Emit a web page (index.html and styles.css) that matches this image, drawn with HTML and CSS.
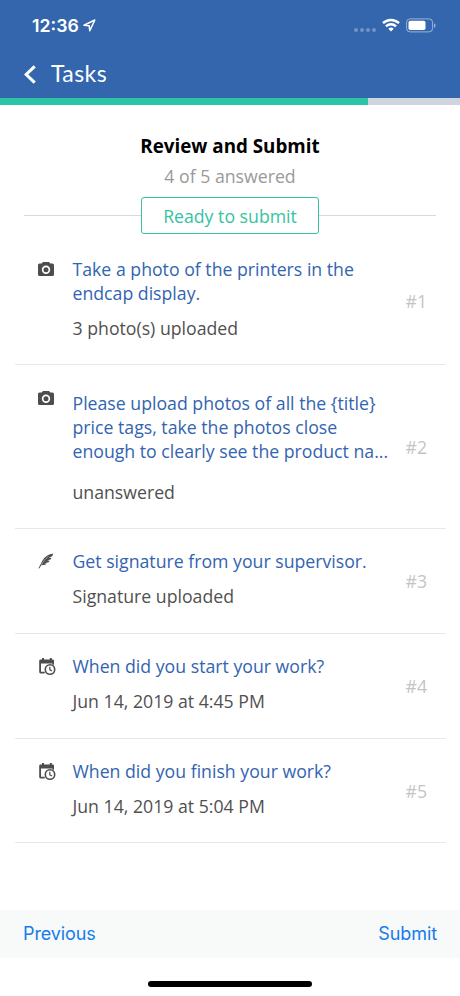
FILE: index.html
```html
<!DOCTYPE html>
<html lang="en">
<head>
  <meta charset="UTF-8">
  <meta name="viewport" content="width=device-width, initial-scale=1.0">
  <title>Tasks - Review and Submit</title>
  <link rel="stylesheet" href="styles.css">
</head>
<body>
  <!-- Shared icons -->
  <svg class="icon-defs" width="0" height="0">
    <symbol id="icon-camera" viewBox="0 0 16 14">
      <path fill-rule="evenodd" d="M5 0h6l1.400 1.500H14.500a1.500 1.500 0 0 1 1.500 1.500v9.500a1.500 1.500 0 0 1-1.500 1.500h-13A1.500 1.500 0 0 1 0 12.500V3a1.500 1.500 0 0 1 1.500-1.500h2.100zM8 3.500a4.200 4.200 0 1 0 0 8.400 4.200 4.200 0 0 0 0-8.400zm0 1.700a2.500 2.500 0 1 1 0 5 2.500 2.500 0 0 1 0-5z"/>
    </symbol>
    <symbol id="icon-feather" viewBox="0 0 16 16">
      <path d="M15.300.4C10.500 1 6.800 3.500 4.600 7.300 3.400 9.400 2.900 11.300.4 15.200l.8.400 2.300-3.500c2 .3 3.900-.1 5.400-1.300l-2.300-.5 4.100-1 1-1.500-2.500-.2 3.700-1.300.5-1.400-2.500-.1 3.300-1.500z"/>
      <path d="M3.600 11.800C5 8.600 7.200 5.700 10.500 3.500" fill="none" stroke="#fff" stroke-width=".4"/>
    </symbol>
    <symbol id="icon-calendar" viewBox="0 0 17 17">
      <path d="M1.600 1.400H3V0h2v1.400h5.800V0h2v1.400h.8A1.400 1.400 0 0 1 15 2.800V6.700H13.400V5.500H2v8.300h3.700v1.700H1.600A1.400 1.400 0 0 1 .2 14.100V2.800a1.400 1.400 0 0 1 1.400-1.400z"/>
      <circle cx="11" cy="11.500" r="4.700" fill="none" stroke="currentColor" stroke-width="1.600"/>
      <path d="M10.800 8.700v3.100l2.200 1.300" fill="none" stroke="currentColor" stroke-width="1.200"/>
    </symbol>
  </svg>

  <div class="header">
    <div class="status-bar">
      <div class="clock">12:36</div>
      <svg class="location" width="13" height="13" viewBox="0 0 13 13">
        <path d="M1 6.200L11.800 1 6.800 11.800 6.200 6.700z" fill="none" stroke="#fff" stroke-width="1.500" stroke-linejoin="round"/>
      </svg>
      <div class="signal"><span></span><span></span><span></span><span></span></div>
      <svg class="wifi" width="18" height="14" viewBox="0 0 18 14">
        <path d="M1 5.200a11.400 11.400 0 0 1 16 0M4 8.300a7.200 7.200 0 0 1 10 0" fill="none" stroke="#fff" stroke-width="2.500"/>
        <path d="M9 13.500L6.300 10.800a3.900 3.900 0 0 1 5.400 0z" fill="#fff"/>
      </svg>
      <svg class="battery" width="30" height="15" viewBox="0 0 30 15">
        <rect x=".6" y=".9" width="26" height="13" rx="3.500" fill="none" stroke="#fff" stroke-opacity=".5"/>
        <rect x="2.500" y="2.800" width="17" height="9.200" rx="1.800" fill="#fff"/>
        <path d="M28 5.200c2.100.8 2.100 3.800 0 4.600z" fill="#fff" fill-opacity=".5"/>
      </svg>
    </div>
    <div class="nav-bar">
      <svg width="12" height="19" viewBox="0 0 12 19">
        <path d="M10.700 1.300L2.200 9.500l8.500 8.200" fill="none" stroke="#fff" stroke-width="3.100"/>
      </svg>
      <div class="nav-title">Tasks</div>
    </div>
  </div>
  <div class="progress"><div class="progress-fill"></div></div>

  <div class="summary">
    <h1>Review and Submit</h1>
    <p class="answered">4 of 5 answered</p>
    <div class="ready-row">
      <div class="ready">Ready to submit</div>
    </div>
  </div>

  <div class="questions">
    <div class="question">
      <svg class="icon camera"><use href="#icon-camera"/></svg>
      <div class="question-text">
        <div class="question-title">Take a photo of the printers in the<br>endcap display.</div>
        <div class="answer">3 photo(s) uploaded</div>
      </div>
      <div class="number">#1</div>
    </div>
    <div class="question long">
      <svg class="icon camera"><use href="#icon-camera"/></svg>
      <div class="question-text">
        <div class="question-title">Please upload photos of all the {title}<br>price tags, take the photos close<br>enough to clearly see the product na...</div>
        <div class="answer">unanswered</div>
      </div>
      <div class="number">#2</div>
    </div>
    <div class="question">
      <svg class="icon feather"><use href="#icon-feather"/></svg>
      <div class="question-text">
        <div class="question-title">Get signature from your supervisor.</div>
        <div class="answer">Signature uploaded</div>
      </div>
      <div class="number">#3</div>
    </div>
    <div class="question">
      <svg class="icon calendar"><use href="#icon-calendar"/></svg>
      <div class="question-text">
        <div class="question-title">When did you start your work?</div>
        <div class="answer">Jun 14, 2019 at 4:45 PM</div>
      </div>
      <div class="number">#4</div>
    </div>
    <div class="question">
      <svg class="icon calendar"><use href="#icon-calendar"/></svg>
      <div class="question-text">
        <div class="question-title">When did you finish your work?</div>
        <div class="answer">Jun 14, 2019 at 5:04 PM</div>
      </div>
      <div class="number">#5</div>
    </div>
  </div>

  <div class="toolbar">
    <a class="previous">Previous</a>
    <a class="submit">Submit</a>
  </div>
  <div class="home-indicator"></div>
</body>
</html>
```
FILE: styles.css
```css
* {
  box-sizing: border-box;
}

body {
  display: flex;
  flex-direction: column;
  width: 460px;
  height: 996px;
  margin: 0;
  background: #fff;
  font-family: 'Open Sans', sans-serif;
  font-size: 17.7px;
  line-height: 24px;
  color: #505050;
  overflow: hidden;
}

.icon-defs {
  display: none;
}

.header {
  height: 98px;
  background: #3466ae;
  color: #fff;
}

.status-bar {
  display: flex;
  align-items: center;
  height: 50px;
  padding: 1px 24px 0 32px;
}

.clock {
  width: 47px;
  font-family: Inter, sans-serif;
  font-size: 17.7px;
  font-weight: 600;
}

.location {
  margin-left: 4px;
}

.signal {
  display: flex;
  gap: 2px;
  margin: 9px 6px 0 auto;
}

.signal span {
  width: 4px;
  height: 4px;
  border-radius: 50%;
  background: #7194c6;
}

.wifi {
  margin-top: -1px;
}

.battery {
  margin-left: 6px;
}

.nav-bar {
  display: flex;
  align-items: center;
  height: 48px;
  padding-left: 24px;
}

.nav-title {
  margin: -3px 0 0 15px;
  font-family: Lato, sans-serif;
  font-size: 23px;
  letter-spacing: 0.4px;
}

.progress {
  height: 7px;
  background: #ced5df;
}

.progress-fill {
  width: 80%;
  height: 100%;
  background: #2bc4a6;
}

.summary {
  height: 131px;
  padding-top: 29px;
  text-align: center;
}

h1 {
  margin: 0;
  font-size: 18.8px;
  font-weight: bold;
  line-height: 24px;
  color: #000;
}

.answered {
  margin: 6px 0 9px;
  color: #999;
}

.ready-row {
  display: flex;
  align-items: center;
  margin: 0 24px;
}

/* Lines either side of the badge */
.ready-row::before,
.ready-row::after {
  content: "";
  flex: 1;
  height: 1px;
  background: #d5dadb;
}

.ready {
  width: 178px;
  height: 37px;
  border: 1px solid #36c3a1;
  border-radius: 3px;
  line-height: 36px;
  color: #36c3a1;
}

.questions {
  padding: 0 14px 0 15px;
}

.question {
  display: flex;
  padding: 20px 19px 25px 23px;
  border-bottom: 1px solid #e8e8ea;
}

.question:first-child {
  padding: 21px 19px 24px 23px;
}

.question.long {
  padding: 21px 19px 24px 23px;
}

.question:last-child {
  padding-bottom: 24px;
}

.icon {
  flex: none;
  fill: currentColor;
  color: #4d4d4d;
}

.camera {
  width: 16px;
  height: 14px;
  margin-top: 5px;
}

.feather {
  width: 16px;
  height: 16px;
  margin-top: 4px;
}

.calendar {
  width: 17px;
  height: 17px;
  margin: 4px -2px 0 1px;
}

.question-text {
  width: 320px;
  margin-left: 18.5px;
}

.question-title {
  color: #3264b0;
}

.long .question-title {
  margin: 5px 0;
}

.answer {
  margin-top: 11px;
}

.long .answer {
  margin-top: 17px;
}

.number {
  align-self: center;
  margin-left: auto;
  padding-top: 4px;
  color: #c4c4c4;
}

.toolbar {
  display: flex;
  justify-content: space-between;
  align-items: center;
  height: 48px;
  margin-top: auto;
  padding: 0 23px;
  background: #f8f9f9;
  font-family: Inter, sans-serif;
  font-size: 18px;
  letter-spacing: -0.1px;
  color: #147ced;
}

.home-indicator {
  width: 164px;
  height: 6px;
  margin: 23px auto 9px;
  border-radius: 3px;
  background: #000;
}
```
